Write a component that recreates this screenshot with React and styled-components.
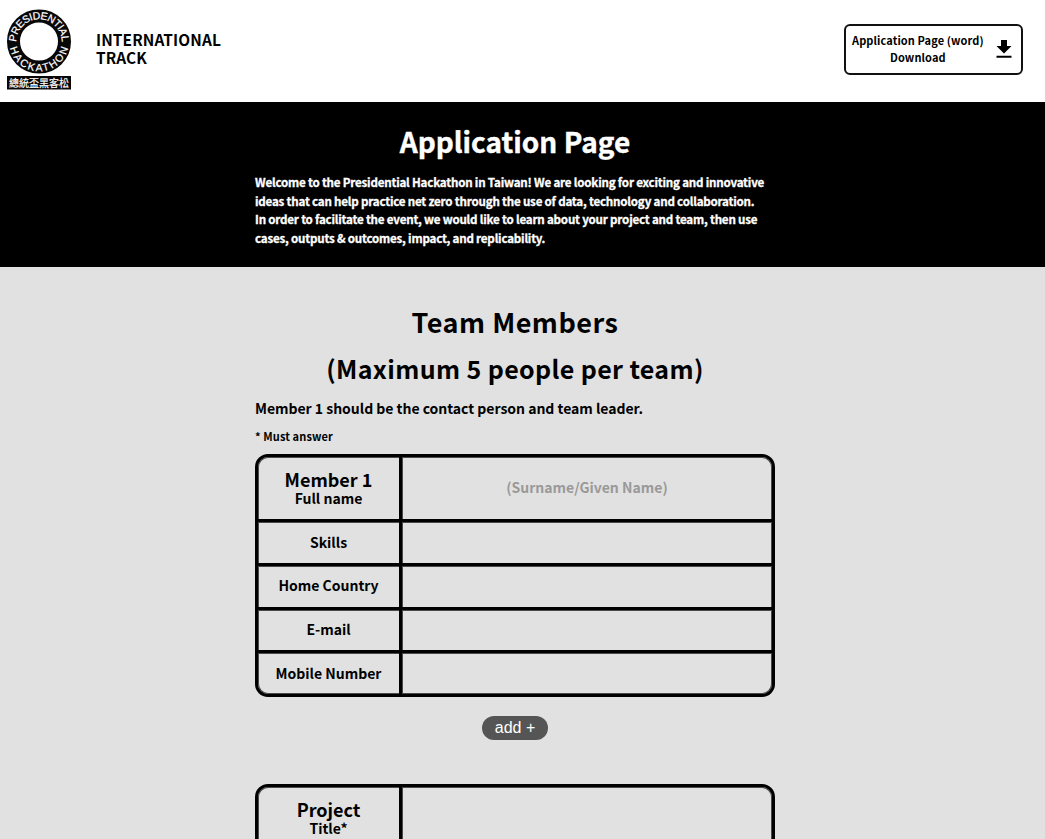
import React from 'react';
import styled, { createGlobalStyle } from 'styled-components';

const GlobalStyle = createGlobalStyle`
  * { box-sizing: border-box; }
  html { overflow: hidden; }
  body {
    margin: 0;
    height: 839px;
    overflow: hidden;
    background: #e1e1e1;
    color: #000;
    font-family: "Noto Sans CJK TC", sans-serif;
    font-weight: 700;
  }
  h1, h2, p { margin: 0; font-weight: 700; }
`;

const Header = styled.header`
  display: flex;
  align-items: flex-start;
  height: 102px;
  padding: 8px 22px 0 5px;
  background: #fff;
`;

const LogoMark = styled.svg`
  display: block;
  flex: none;
`;

const Brand = styled.div`
  margin: 22px 0 0 23px;
  font-size: 15.4px;
  line-height: 18px;
  letter-spacing: 0.13px;
`;

const Download = styled.a`
  display: flex;
  align-items: center;
  width: 179px;
  height: 51px;
  margin: 16px 0 0 auto;
  padding: 0 0 2px 6px;
  border: 2px solid #111;
  border-radius: 6px;
  font-size: 11px;
  line-height: 17px;
  letter-spacing: 0.1px;
  text-align: center;
  white-space: nowrap;
  svg { flex: none; margin: 0 0 0 12px; }
`;

const Hero = styled.section`
  height: 165px;
  padding-top: 18px;
  background: #000;
  color: #fff;
`;

const Column = styled.div`
  width: 520px;
  margin-left: 255px;
`;

const HeroTitle = styled.h1`
  font-size: 28px;
  line-height: 42px;
  text-align: center;
  -webkit-text-stroke: 0.4px #fff;
`;

const Intro = styled.p`
  margin-top: 11px;
  font-size: 11.6px;
  line-height: 18.7px;
  letter-spacing: -0.2px;
  white-space: nowrap;
  -webkit-text-stroke: 0.3px #fff;
`;

const Heading = styled.h2`
  font-size: ${(p) => p.$size}px;
  line-height: ${(p) => p.$line}px;
  letter-spacing: ${(p) => p.$spacing}px;
  text-align: center;
  white-space: nowrap;
`;

const Main = styled.main`
  padding-top: 31px;
`;

const Lead = styled.p`
  margin-top: 6px;
  font-size: 14px;
  line-height: 24px;
  letter-spacing: -0.02px;
`;

const Note = styled.p`
  margin: 7px 0 9px;
  font-size: 11px;
  line-height: 18px;
  letter-spacing: 0.12px;
`;

const FormTable = styled.div`
  border: 3px solid #000;
  border-radius: 13px;
  box-shadow: inset 0 0 0 1px #4a4a4a;
`;

const Row = styled.div`
  display: flex;
  height: ${(p) => p.$height}px;
  border-top: ${(p) => (p.$first ? 0 : 3)}px solid #000;
  box-shadow: ${(p) => (p.$first ? 'none' : 'inset 0 1px #4a4a4a')};
`;

const Label = styled.div`
  display: flex;
  flex-direction: column;
  justify-content: center;
  width: 144px;
  padding-bottom: ${(p) => (p.$titled ? 0 : 1)}px;
  border-right: 3px solid #000;
  box-shadow: 1px 0 #4a4a4a;
  font-size: 14px;
  line-height: 19px;
  text-align: center;
`;

const Big = styled.span`
  font-size: 18px;
  line-height: 20px;
`;

const Field = styled.input`
  flex: 1;
  min-width: 0;
  padding: 0 0 2px;
  border: 0;
  background: transparent;
  font: inherit;
  font-size: 14px;
  text-align: center;
  &::placeholder { color: #999; opacity: 1; }
`;

const AddButton = styled.button`
  display: block;
  width: 66px;
  height: 24px;
  margin: 19px auto 44px 227px;
  padding: 0;
  border: 0;
  border-radius: 12px;
  background: #555;
  color: #fff;
  font: 400 16px/22px "Liberation Sans", sans-serif;
`;

function Logo() {
  return (
    <LogoMark width="68" height="84" viewBox="5 8 68 84" role="img">
      <defs>
        <path id="upper-arc" d="M 16.3 42 A 22.7 22.7 0 0 1 61.7 42" />
        <path id="lower-arc" d="M 9.7 46 A 29.6 29.6 0 0 0 68.3 46" />
      </defs>
      <circle cx="39" cy="41.5" r="25.5" fill="none" stroke="#080808" strokeWidth="13" />
      <g fill="#fff" stroke="#fff" strokeWidth="0.2" fontFamily="Liberation Sans, sans-serif" fontWeight="400" fontSize="10.5">
        <text><textPath href="#upper-arc" startOffset="0.2" textLength="70.5">PRESIDENTIAL</textPath></text>
        <text><textPath href="#lower-arc" startOffset="2" textLength="80">HACKATHON</textPath></text>
      </g>
      <rect x="7" y="76" width="64" height="13.5" fill="#080808" />
      <text x="39" y="86.6" fill="#fff" stroke="#fff" strokeWidth="0.2" fontFamily="Noto Sans CJK TC, sans-serif" fontWeight="400" fontSize="10" textAnchor="middle">總統盃黑客松</text>
    </LogoMark>
  );
}

function DownloadIcon() {
  return (
    <svg width="16" height="20" viewBox="0 0 16 20">
      <path d="M5 1h6v6h4.5L8 14.5 .5 7H5z M.5 16.8h15v2H.5z" fill="#000" />
    </svg>
  );
}

const memberRows = ['Skills', 'Home Country', 'E-mail', 'Mobile Number'];

export default function App() {
  return (
    <>
      <GlobalStyle />
      <Header>
        <Logo />
        <Brand>INTERNATIONAL<br />TRACK</Brand>
        <Download>
          <span>Application Page (word)<br />Download</span>
          <DownloadIcon />
        </Download>
      </Header>
      <Hero>
        <Column>
          <HeroTitle>Application Page</HeroTitle>
          <Intro>
            Welcome to the Presidential Hackathon in Taiwan! We are looking for exciting and innovative<br />
            ideas that can help practice net zero through the use of data, technology and collaboration.<br />
            In order to facilitate the event, we would like to learn about your project and team, then use<br />
            cases, outputs &amp; outcomes, impact, and replicability.
          </Intro>
        </Column>
      </Hero>
      <Main>
        <Column>
          <Heading $size={27} $spacing={0.5} $line={48}>Team Members</Heading>
          <Heading $size={25} $spacing={0.37} $line={44}>(Maximum 5 people per team)</Heading>
          <Lead>Member 1 should be the contact person and team leader.</Lead>
          <Note>* Must answer</Note>
          <FormTable>
            <Row $first $height={62.4}>
              <Label $titled><Big>Member 1</Big>Full name</Label>
              <Field placeholder="(Surname/Given Name)" />
            </Row>
            {memberRows.map((label) => (
              <Row key={label} $height={43.65}>
                <Label>{label}</Label>
                <Field />
              </Row>
            ))}
          </FormTable>
          <AddButton>add +</AddButton>
          <FormTable>
            <Row $first $height={62.4}>
              <Label $titled><Big>Project</Big>Title*</Label>
              <Field />
            </Row>
          </FormTable>
        </Column>
      </Main>
    </>
  );
}
